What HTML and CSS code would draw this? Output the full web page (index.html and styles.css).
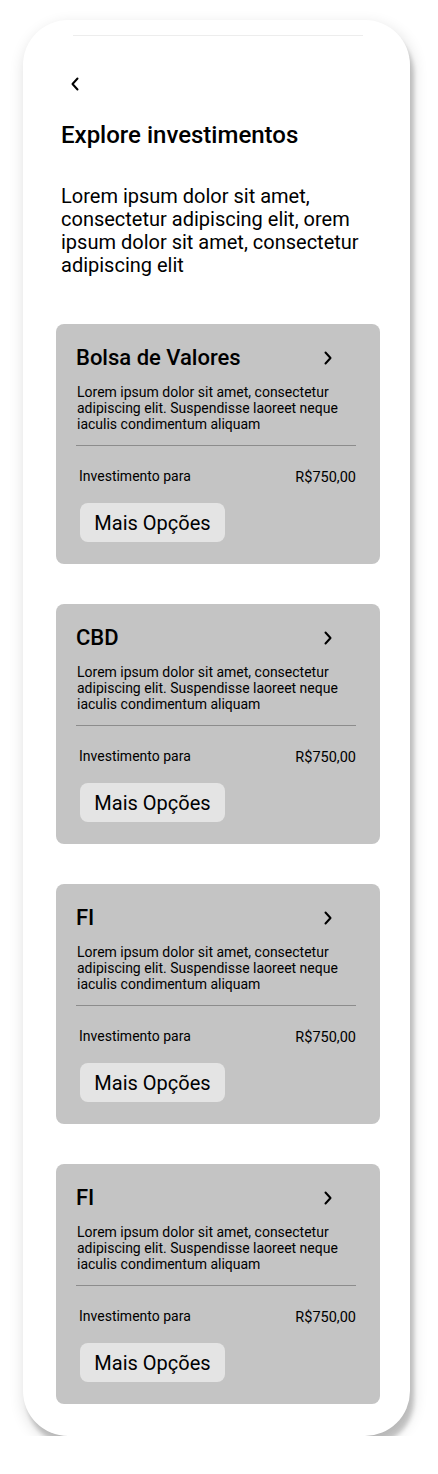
FILE: index.html
```html
<!DOCTYPE html>
<html lang="pt-BR">
<head>
<meta charset="utf-8">
<title>Explore investimentos</title>
<link rel="stylesheet" href="styles.css">
</head>
<body>
<div class="phone">
  <div class="notch-line"></div>
  <div class="back">
    <svg width="24" height="24" viewBox="0 0 24 24"><path d="M14.5 6.5 L9.5 12 L14.5 17.5" fill="none" stroke="#000" stroke-width="2" stroke-linecap="round" stroke-linejoin="round"/></svg>
  </div>
  <h1 class="title">Explore investimentos</h1>
  <p class="intro">Lorem ipsum dolor sit amet, consectetur adipiscing elit, orem ipsum dolor sit amet, consectetur adipiscing elit</p>

  <div class="cards">
    <div class="card">
      <div class="card-head">
        <h2 class="card-title">Bolsa de Valores</h2>
        <span class="chev"><svg width="24" height="24" viewBox="0 0 24 24"><path d="M9.5 6.5 L14.5 12 L9.5 17.5" fill="none" stroke="#000" stroke-width="2" stroke-linecap="round" stroke-linejoin="round"/></svg></span>
      </div>
      <p class="card-desc">Lorem ipsum dolor sit amet, consectetur adipiscing elit. Suspendisse laoreet neque iaculis condimentum aliquam</p>
      <div class="divider"></div>
      <div class="row"><span>Investimento para</span><span class="price">R$750,00</span></div>
      <button class="btn">Mais Opções</button>
    </div>

    <div class="card">
      <div class="card-head">
        <h2 class="card-title">CBD</h2>
        <span class="chev"><svg width="24" height="24" viewBox="0 0 24 24"><path d="M9.5 6.5 L14.5 12 L9.5 17.5" fill="none" stroke="#000" stroke-width="2" stroke-linecap="round" stroke-linejoin="round"/></svg></span>
      </div>
      <p class="card-desc">Lorem ipsum dolor sit amet, consectetur adipiscing elit. Suspendisse laoreet neque iaculis condimentum aliquam</p>
      <div class="divider"></div>
      <div class="row"><span>Investimento para</span><span class="price">R$750,00</span></div>
      <button class="btn">Mais Opções</button>
    </div>

    <div class="card">
      <div class="card-head">
        <h2 class="card-title">FI</h2>
        <span class="chev"><svg width="24" height="24" viewBox="0 0 24 24"><path d="M9.5 6.5 L14.5 12 L9.5 17.5" fill="none" stroke="#000" stroke-width="2" stroke-linecap="round" stroke-linejoin="round"/></svg></span>
      </div>
      <p class="card-desc">Lorem ipsum dolor sit amet, consectetur adipiscing elit. Suspendisse laoreet neque iaculis condimentum aliquam</p>
      <div class="divider"></div>
      <div class="row"><span>Investimento para</span><span class="price">R$750,00</span></div>
      <button class="btn">Mais Opções</button>
    </div>

    <div class="card">
      <div class="card-head">
        <h2 class="card-title">FI</h2>
        <span class="chev"><svg width="24" height="24" viewBox="0 0 24 24"><path d="M9.5 6.5 L14.5 12 L9.5 17.5" fill="none" stroke="#000" stroke-width="2" stroke-linecap="round" stroke-linejoin="round"/></svg></span>
      </div>
      <p class="card-desc">Lorem ipsum dolor sit amet, consectetur adipiscing elit. Suspendisse laoreet neque iaculis condimentum aliquam</p>
      <div class="divider"></div>
      <div class="row"><span>Investimento para</span><span class="price">R$750,00</span></div>
      <button class="btn">Mais Opções</button>
    </div>
  </div>
</div>
</body>
</html>
```
FILE: styles.css
```css
* { box-sizing: border-box; }
html, body { margin: 0; padding: 0; background: #fff; }
body {
  font-family: Roboto, "Liberation Sans", Arial, sans-serif;
  color: #000;
  padding: 20px 0 0 23px;
}
.phone {
  width: 387px;
  height: 1416px;
  background: #fff;
  border-radius: 45px;
  box-shadow: 4px 9px 4px rgba(0,0,0,0.18), 2px 6px 16px rgba(0,0,0,0.16);
  padding-top: 15px;
  overflow: hidden;
}
.notch-line {
  height: 1px;
  margin: 0 47px 0 50px;
  background: #ededed;
}
.back {
  width: 24px;
  height: 24px;
  margin: 36px 0 0 40px;
}
.back svg, .chev svg { display: block; }
.title {
  margin: 23.75px 0 0 38px;
  font-size: 24px;
  line-height: 30px;
  font-weight: 500;
}
.intro {
  margin: 35px 0 0 38px;
  width: 302px;
  font-size: 20px;
  line-height: 23px;
}
.cards {
  margin: 47.4px 30px 0 33px;
  display: flex;
  flex-direction: column;
  gap: 40px;
}
.card {
  background: #c4c4c4;
  border-radius: 8px;
  height: 240px;
  padding: 21px 24px 0 20px;
  display: flex;
  flex-direction: column;
  align-items: flex-start;
}
.card-head {
  width: 100%;
  display: flex;
  justify-content: space-between;
  align-items: center;
}
.card-title {
  margin: 0;
  font-size: 22px;
  line-height: 26px;
  font-weight: 500;
}
.chev {
  width: 24px;
  height: 24px;
  margin-right: 16px;
}
.card-desc {
  margin: 13px 0 0 1px;
  font-size: 14px;
  line-height: 16px;
}
.divider {
  width: 100%;
  height: 1px;
  background: #8c8c8c;
  margin-top: 13px;
}
.row {
  width: 100%;
  display: flex;
  justify-content: space-between;
  align-items: flex-end;
  margin-top: 22.2px;
  padding-left: 3px;
  font-size: 14px;
  line-height: 16px;
}
.price { font-size: 14.5px; position: relative; top: 1.5px; }
.btn {
  margin: 18.8px 0 0 4px;
  width: 145px;
  height: 39px;
  border: 0;
  border-radius: 8px;
  background: #e4e4e4;
  font-family: inherit;
  font-size: 20px;
  color: #000;
  padding: 0;
}
```
